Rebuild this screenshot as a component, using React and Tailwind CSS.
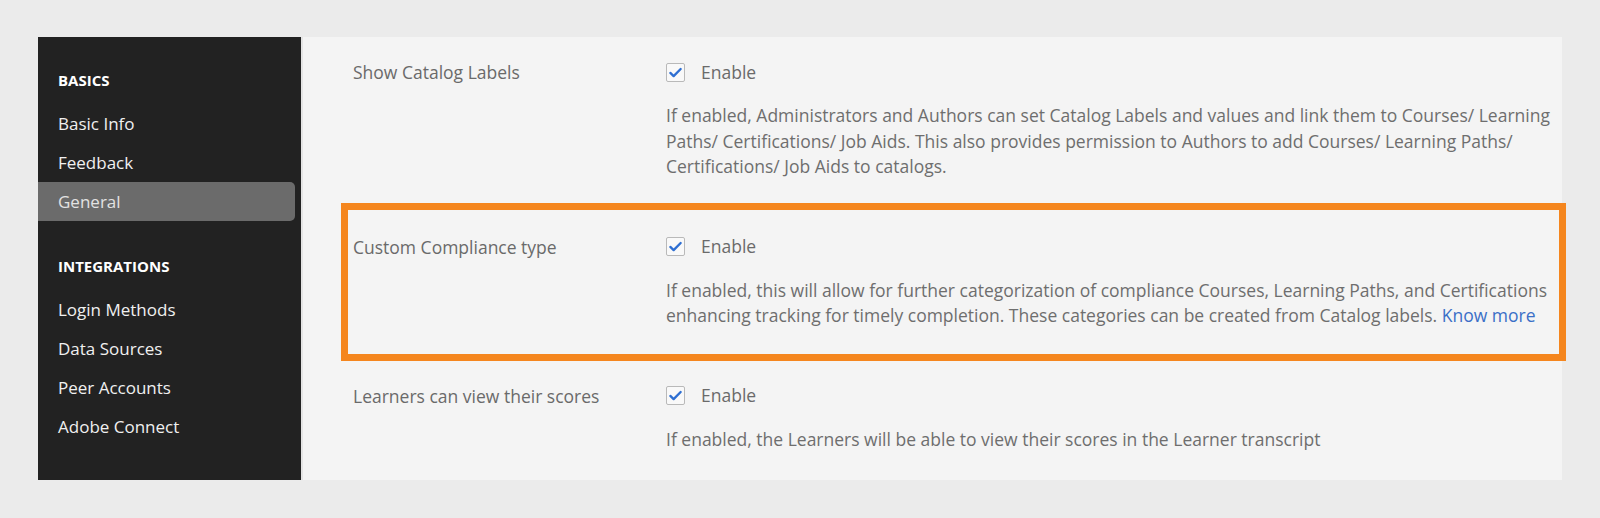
const font = { fontFamily: '"Open Sans", "Liberation Sans", sans-serif' }

function Check() {
  return (
    <span className="w-[19px] h-[19px] shrink-0 rounded-[2px] border-[1.5px] border-[#b9b9b9] bg-[#f9f9f9] flex items-center justify-center">
      <svg viewBox="0 0 16 16" className="w-[15px] h-[15px]" fill="none">
        <path d="M2.5 8.5l3.5 3.3L13.5 4.3" stroke="#2f6fd2" strokeWidth="2.5" strokeLinecap="round" strokeLinejoin="round" />
      </svg>
    </span>
  )
}

function Row({ label, lines, className = '' }) {
  return (
    <div className={`flex ${className}`}>
      <div className="w-[313px] shrink-0 h-6 leading-6 text-[17.5px] text-[#6a6a6a]">{label}</div>
      <div className="flex-1">
        <div className="flex items-center h-6">
          <Check />
          <span className="ml-4 text-[17.5px] text-[#6a6a6a]">Enable</span>
        </div>
        <div className="mt-[19px] text-[17.5px] leading-[25.5px] text-[#6e6e6e] whitespace-nowrap">
          {lines.map((l, i) => (
            <div key={i}>{l}</div>
          ))}
        </div>
      </div>
    </div>
  )
}

const SideItem = ({ children, active }) => (
  <div
    className={`h-[39px] flex items-center pl-5 mr-[6px] text-[17px] font-medium rounded-r-[5px] ${
      active ? 'bg-[#6b6b6b] text-[#e2e2e2]' : 'text-[#f0f0f0]'
    }`}
  >
    {children}
  </div>
)

export default function App() {
  return (
    <div className="w-[1600px] h-[518px] bg-[#ebebeb] pt-[37px] pl-[38px]" style={font}>
      <div className="flex h-[443px] w-[1524px]">
        <aside className="w-[263px] shrink-0 bg-[#222222] pt-[33px]">
          <div className="pl-5 h-5 leading-5 text-[15px] font-bold text-white">BASICS</div>
          <div className="mt-[14px]">
            <SideItem>Basic Info</SideItem>
            <SideItem>Feedback</SideItem>
            <SideItem active>General</SideItem>
          </div>
          <div className="mt-[35px] pl-5 h-5 leading-5 text-[15px] font-bold text-white">INTEGRATIONS</div>
          <div className="mt-[14px]">
            <SideItem>Login Methods</SideItem>
            <SideItem>Data Sources</SideItem>
            <SideItem>Peer Accounts</SideItem>
            <SideItem>Adobe Connect</SideItem>
          </div>
        </aside>
        <main className="relative flex-1 bg-[#f4f4f4] border-l-2 border-[#e4e4e4] pl-[50px] pt-[23px]">
          <Row
            label="Show Catalog Labels"
            lines={[
              'If enabled, Administrators and Authors can set Catalog Labels and values and link them to Courses/ Learning',
              'Paths/ Certifications/ Job Aids. This also provides permission to Authors to add Courses/ Learning Paths/',
              'Certifications/ Job Aids to catalogs.',
            ]}
          />
          <Row
            className="mt-[55px]"
            label="Custom Compliance type"
            lines={[
              'If enabled, this will allow for further categorization of compliance Courses, Learning Paths, and Certifications',
              <>
                enhancing tracking for timely completion. These categories can be created from Catalog labels.{' '}
                <span className="text-[#3b6fc7]">Know more</span>
              </>,
            ]}
          />
          <Row
            className="mt-[55px]"
            label="Learners can view their scores"
            lines={['If enabled, the Learners will be able to view their scores in the Learner transcript']}
          />
          <div className="absolute left-[38px] top-[166px] w-[1225px] h-[158px] border-[7px] border-[#f5861e] pointer-events-none" />
        </main>
      </div>
    </div>
  )
}
